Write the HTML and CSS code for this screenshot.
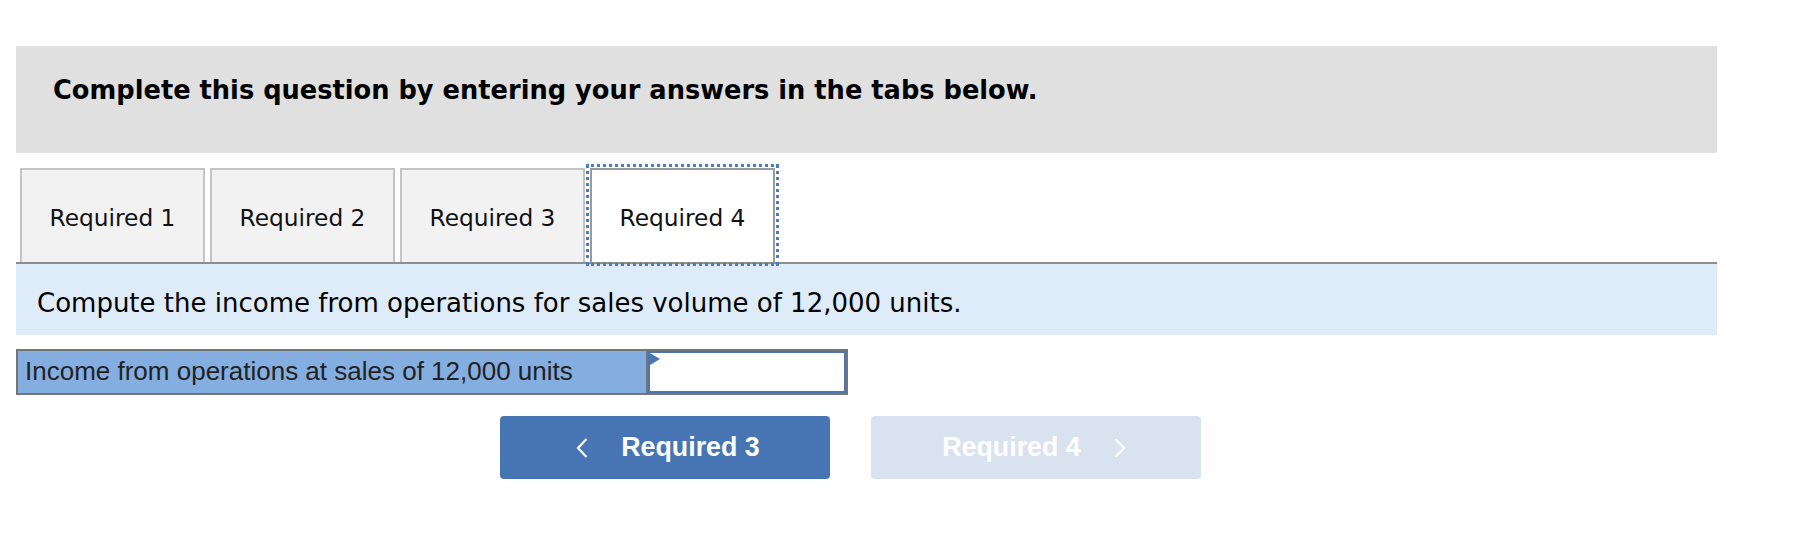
FILE: index.html
```html
<!DOCTYPE html>
<html>
<head>
<meta charset="utf-8">
<link rel="stylesheet" href="styles.css">
</head>
<body>
<div class="wrap">
  <div class="banner"><h2 class="banner-title">Complete this question by entering your answers in the tabs below.</h2></div>
  <div class="tabs">
    <div class="tab">Required 1</div>
    <div class="tab">Required 2</div>
    <div class="tab">Required 3</div>
    <div class="tab active">Required 4</div>
  </div>
  <div class="prompt">Compute the income from operations for sales volume of 12,000 units.</div>
  <div class="answer">
    <div class="answer-label">Income from operations at sales of 12,000 units</div>
    <div class="answer-input"><span class="tri"></span></div>
  </div>
  <div class="nav">
    <button class="btn prev"><svg class="chev" width="12" height="20" viewBox="0 0 12 20"><path d="M10.5 1 L2 10 L10.5 19" fill="none" stroke="#fff" stroke-width="2.2"/></svg><span>Required 3</span></button>
    <button class="btn next" disabled><span>Required 4</span><svg class="chev" width="12" height="20" viewBox="0 0 12 20"><path d="M1.5 1 L10 10 L1.5 19" fill="none" stroke="#fff" stroke-width="2.2"/></svg></button>
  </div>
</div>
</body>
</html>
```
FILE: styles.css
```css
body {
  margin: 0;
  background: #fff;
}
.wrap {
  margin-left: 16px;
  width: 1701px;
  padding-top: 46px;
}
.banner {
  height: 107px;
  box-sizing: border-box;
  background: #e0e0e0;
  padding: 29px 0 0 37px;
}
.banner-title {
  margin: 0;
  font-family: "DejaVu Sans", Verdana, sans-serif;
  font-weight: bold;
  font-size: 25.7px;
  line-height: normal;
  color: #000;
}
.tabs {
  display: flex;
  align-items: flex-end;
  gap: 5px;
  padding-left: 4px;
  margin-top: 15px;
  border-bottom: 2px solid #8e8e8e;
}
.tab {
  width: 185px;
  height: 94px;
  box-sizing: border-box;
  border: 2px solid #c4c4c4;
  border-bottom: none;
  background: #f2f2f2;
  display: flex;
  align-items: center;
  justify-content: center;
  padding-top: 2px;
  font-family: "DejaVu Sans", Verdana, sans-serif;
  font-size: 23.3px;
  color: #111;
}
.tab.active {
  background: #fff;
  border-color: #9a9a9a;
  outline: 3px dotted #4b7cc0;
  outline-offset: 1px;
  position: relative;
  z-index: 1;
}
.prompt {
  height: 71px;
  box-sizing: border-box;
  background: #deebf8;
  padding: 24px 0 0 21px;
  font-family: "DejaVu Sans", Verdana, sans-serif;
  font-size: 26px;
  line-height: normal;
  color: #000;
}
.answer {
  margin-top: 14px;
  display: flex;
  width: 832px;
  height: 46px;
  box-sizing: border-box;
  border: 2px solid #757575;
}
.answer-label {
  width: 621px;
  border-right: 2px solid #757575;
  background: #84aee0;
  padding: 5px 0 0 7px;
  font-family: "Liberation Sans", Arial, sans-serif;
  font-size: 26px;
  line-height: normal;
  color: #222;
  white-space: nowrap;
}
.answer-input {
  flex: 1;
  position: relative;
  border: 2px solid #4a76b5;
  background: #fff;
}
.tri {
  position: absolute;
  left: 0;
  top: 0;
  width: 0;
  height: 0;
  border-left: 10px solid #4a76b5;
  border-top: 6px solid transparent;
  border-bottom: 6px solid transparent;
}
.nav {
  display: flex;
  gap: 41px;
  padding-left: 484px;
  margin-top: 21px;
}
.btn {
  width: 330px;
  height: 63px;
  border: none;
  border-radius: 4px;
  display: flex;
  align-items: center;
  justify-content: center;
  gap: 33px;
  padding: 0;
  font-family: "Liberation Sans", Arial, sans-serif;
  font-weight: bold;
  font-size: 26.8px;
  color: #fff;
}
.btn.prev {
  background: #4775b3;
  padding-left: 6px;
}
.btn.next {
  background: #d9e3ef;
  padding-right: 4px;
}
.chev {
  display: block;
}
```
